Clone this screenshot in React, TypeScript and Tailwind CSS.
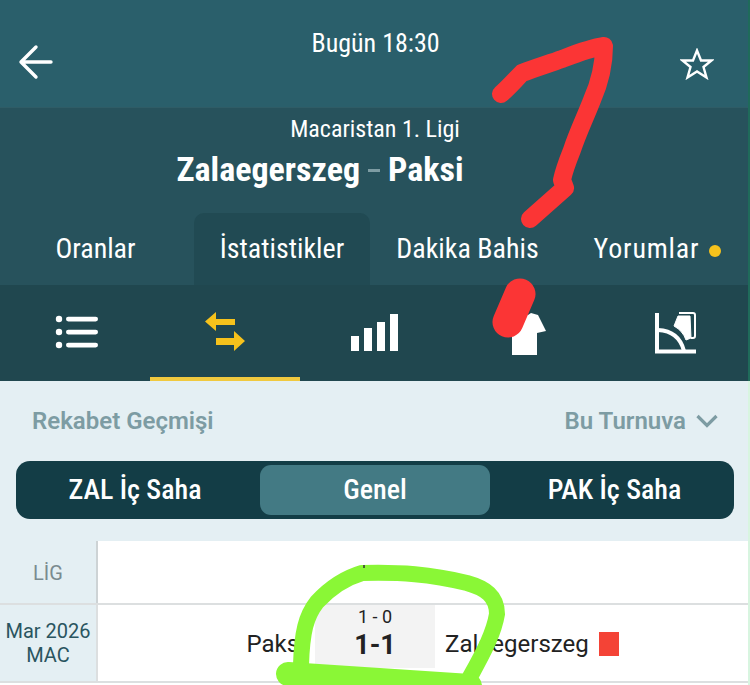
import React from 'react';

const Condensed: React.FC<{ children: React.ReactNode; className?: string }> = ({ children, className }) => (
  <span className={`inline-block whitespace-nowrap [font-stretch:75%] ${className ?? ''}`}>{children}</span>
);

const tabs = [
  { label: 'Oranlar', width: 'w-[194px] pr-[3px]' },
  { label: 'İstatistikler', width: 'w-[176px]', active: true },
  { label: 'Dakika Bahis', width: 'w-[195px]' },
  { label: 'Yorumlar', width: 'w-[185px]', dot: true, tracking: 'tracking-[0.8px]' },
];

const ListIcon = () => (
  <svg width="44" height="36" viewBox="0 0 44 36" fill="white">
    <circle cx="4" cy="5" r="3.2" />
    <circle cx="4" cy="18" r="3.2" />
    <circle cx="4" cy="31" r="3.2" />
    <rect x="11" y="2.8" width="32" height="4.6" rx="2.3" />
    <rect x="11" y="15.8" width="32" height="4.6" rx="2.3" />
    <rect x="11" y="28.8" width="32" height="4.6" rx="2.3" />
  </svg>
);

const SwapIcon = () => (
  <svg width="40" height="40" viewBox="0 0 40 40" fill="#f6c21c">
    <path d="M0 9.5 L11 0 L11 7 L30 7 L30 13 L11 13 L11 19 Z" />
    <path d="M40 29 L29 19 L29 26 L11 26 L11 33 L29 33 L29 39 Z" />
  </svg>
);

const BarsIcon = () => (
  <svg width="48" height="38" viewBox="0 0 48 38" fill="white">
    <rect x="0" y="22" width="8" height="15" />
    <rect x="13" y="14" width="8" height="23" />
    <rect x="26" y="8" width="8" height="29" />
    <rect x="39" y="0" width="8" height="37" />
  </svg>
);

const ShirtIcon = () => (
  <svg width="46" height="44" viewBox="0 0 46 44" fill="white">
    <path d="M10 43 L10 20 L1 20 L9 4 L17 1 Q23 6 29 1 L36 3 L44 19 L35 21 L35 43 Z" />
  </svg>
);

const CardsIcon = () => (
  <svg width="42" height="42" viewBox="0 0 42 42" fill="none" stroke="white">
    <path d="M2 1 L2 39.5 L41 39.5" strokeWidth="4" />
    <path d="M3 18 Q24 19 29 39" strokeWidth="4" />
    <path d="M24 1 L38 1 Q40 1 40 3 L40 24 Q40 26 38 26 L36 26" strokeWidth="2" />
    <path d="M23 4 L35 4 L36 26 L31 28 Q28 19 19 14 Z" fill="white" strokeWidth="1" />
  </svg>
);

export default function App() {
  return (
    <div className="relative w-[750px] h-[685px] overflow-hidden bg-white [font-family:Roboto,sans-serif]">
      <header className="h-[107px] bg-[#2a5f6b] flex items-start justify-between pl-[18px] pr-[36px] relative">
        <svg width="36" height="36" viewBox="0 0 36 36" fill="none" stroke="white" strokeWidth="3.4" strokeLinecap="round" strokeLinejoin="round" className="mt-[44px]">
          <path d="M3 18 H33 M18 3 L3 18 L18 33" />
        </svg>
        <div className="pt-[29px] text-white text-[26px] leading-[28px] ml-[17px]">
          <Condensed>Bugün 18:30</Condensed>
        </div>
        <svg width="34" height="32" viewBox="0 0 34 32" fill="none" stroke="white" strokeWidth="2.4" strokeLinejoin="miter" className="mt-[48px]">
          <path d="M17 2.5 L21 12.5 L31.5 12.5 L23.5 19 L26.5 29.5 L17 23.5 L7.5 29.5 L10.5 19 L2.5 12.5 L13 12.5 Z" />
        </svg>
      </header>

      <section className="h-[178px] bg-[#27525c] border-t border-[#2f5c66] flex flex-col items-center">
        <div className="mt-[8px] text-[24px] leading-[26px] text-white">
          <Condensed>Macaristan 1. Ligi</Condensed>
        </div>
        <div className="mt-[9px] flex items-center text-[34px] leading-[36px] font-bold text-white mr-[110px]">
          <Condensed>Zalaegerszeg</Condensed>
          <span className="mx-[8px] w-[12px] h-[3px] bg-[#7d9ca3] mt-[2px]" />
          <Condensed>Paksi</Condensed>
        </div>
        <nav className="mt-[26px] flex w-full flex-1">
          {tabs.map(tab => (
            <div
              key={tab.label}
              className={`${tab.width} flex items-center justify-center gap-[10px] text-[28px] text-white ${
                tab.active ? 'bg-[#214a53] rounded-t-[10px]' : ''
              }`}
            >
              <Condensed className={tab.tracking}>{tab.label}</Condensed>
              {tab.dot && <span className="w-[12px] h-[12px] rounded-full bg-[#f6c21c] mt-[3px]" />}
            </div>
          ))}
        </nav>
      </section>

      <div className="h-[96px] bg-[#20474f] flex">
        <div className="w-[150px] flex items-center justify-center pl-[4px] pb-[2px]"><ListIcon /></div>
        <div className="w-[150px] flex items-center justify-center pt-[3px] pb-[1px] border-b-[4px] border-[#f0c93f]"><SwapIcon /></div>
        <div className="w-[150px] flex items-center justify-center"><BarsIcon /></div>
        <div className="w-[150px] flex items-center justify-center pt-[2px]"><ShirtIcon /></div>
        <div className="w-[150px] flex items-center justify-center pl-[2px]"><CardsIcon /></div>
      </div>

      <section className="h-[160px] bg-[#e4eff3] px-[16px]">
        <div className="h-[80px] flex items-center justify-between pl-[16px] pr-[16px] text-[24px] font-semibold text-[#7d9ca3]">
          <span>Rekabet Geçmişi</span>
          <span className="flex items-center gap-[10px]">
            Bu Turnuva
            <svg width="22" height="14" viewBox="0 0 22 14" fill="none" stroke="#7d9ca3" strokeWidth="3.2">
              <path d="M1.5 2 L11 11.5 L20.5 2" />
            </svg>
          </span>
        </div>
        <div className="h-[58px] bg-[#133d46] rounded-[14px] flex items-center px-[4px] text-white text-[28px] font-medium">
          <div className="w-[240px] flex justify-center pr-[10px]"><Condensed>ZAL İç Saha</Condensed></div>
          <div className="w-[230px] h-[50px] bg-[#437a84] rounded-[11px] flex items-center justify-center"><Condensed>Genel</Condensed></div>
          <div className="flex-1 flex justify-center pl-[9px]"><Condensed>PAK İç Saha</Condensed></div>
        </div>
      </section>

      <div className="flex h-[64px] border-b-[2px] border-[#dcdfe0]">
        <div className="w-[98px] bg-[#e4eff3] border-r-[2px] border-[#cdd3d5] flex items-center justify-center pt-[2px] text-[20px] text-[#7a8b90]">LİG</div>
        <div className="flex-1 bg-white" />
      </div>
      <div className="flex h-[78px] border-b-[2px] border-[#dcdfe0]">
        <div className="w-[98px] bg-[#e4eff3] border-r-[2px] border-[#dcdfe0] flex flex-col items-center justify-center text-[20px] leading-[24px] text-[#2a5560]">
          <span>Mar 2026</span>
          <span>MAC</span>
        </div>
        <div className="flex-1 flex items-start">
          <div className="w-[207px] pt-[24px] text-right text-[24px] leading-[30px] text-[#222]">Paksi</div>
          <div className="ml-[10px] w-[120px] h-[63px] bg-[#f3f3f3] flex flex-col items-center text-[#222]">
            <span className="text-[18px] leading-[22px] mt-[1px]">1 - 0</span>
            <span className="text-[27px] leading-[32px] font-bold mt-[1px]">1-1</span>
          </div>
          <div className="ml-[10px] pt-[24px] flex items-center gap-[10px] text-[24px] leading-[30px] text-[#222]">
            Zalaegerszeg
            <span className="w-[20px] h-[24px] bg-[#f44336]" />
          </div>
        </div>
      </div>

      {/* marker scribbles drawn over the screenshot */}
      <svg width="750" height="685" viewBox="0 0 750 685" fill="none" className="absolute inset-0 pointer-events-none">
        <path d="M501 94 C508 88 515 80 522 73 C535 68 548 64 562 59 C575 54 590 48 604 46 C604 65 600 82 592 100 C585 118 578 132 572 150 C568 160 564 170 562 180 L565 188 L530 219" stroke="#fb3535" strokeWidth="18" strokeLinecap="round" strokeLinejoin="round" />
        <path d="M520 294 L508 322" stroke="#fb3535" strokeWidth="31" strokeLinecap="round" />
        <path d="M470 677 C485 650 494 632 497 614 C497 596 485 588 467 583 C430 574 400 572 362 573 C345 578 330 588 317 602 C306 616 302 632 301 665" stroke="#8af736" strokeWidth="16" strokeLinecap="round" strokeLinejoin="round" />
        <path d="M288 674 L470 686" stroke="#8af736" strokeWidth="24" strokeLinecap="round" />
        <path d="M364 565 V568" stroke="#333" strokeWidth="1.5" />
      </svg>

      {/* thin green edge at the right of the photo */}
      <div className="absolute right-0 top-0 w-[2px] h-[381px] bg-[#1f6b5a]" />
      <div className="absolute right-0 top-[381px] w-[2px] h-[304px] bg-[#d8f5e0]" />
    </div>
  );
}
